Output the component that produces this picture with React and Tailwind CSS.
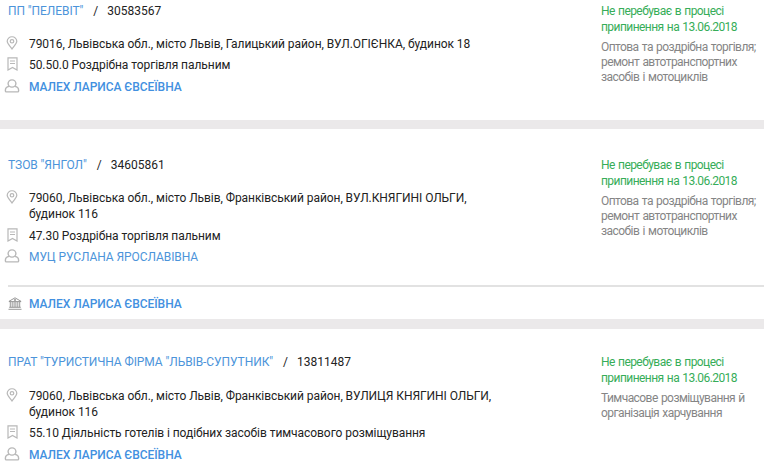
const PinIcon = () => (
  <svg className="h-[14px] w-[12px]" viewBox="0 0 12 15" preserveAspectRatio="none" fill="none" stroke="#b8b8b8" strokeWidth="1.2">
    <path d="M6 14C4.2 11 1.2 8.4 1.2 5.6a4.8 4.8 0 0 1 9.6 0C10.8 8.4 7.8 11 6 14Z" />
    <circle cx="6" cy="5.7" r="1.8" />
  </svg>
);

const BookmarkIcon = () => (
  <svg className="h-[14px] w-[11px]" viewBox="0 0 11 14" fill="none" stroke="#b8b8b8" strokeWidth="1.2">
    <path d="M1 .8h9v12.2L5.5 10.4 1 13ZM3 4h5M3 6.5h5" />
  </svg>
);

const PersonIcon = () => (
  <svg className="h-[14px] w-[16px]" viewBox="0 0 16 15" preserveAspectRatio="none" fill="none" stroke="#b8b8b8" strokeWidth="1.4">
    <circle cx="8" cy="4.8" r="3.9" />
    <path d="M5 7.800C2.500 8.300 1.400 9.700 1.400 12v.8c0 .6.4 1 1 1h11.200c.6 0 1-.4 1-1V12c0-2.300-1.100-3.700-3.600-4.200" />
  </svg>
);

const BankIcon = () => (
  <svg className="h-[13px] w-[14px]" viewBox="0 0 14 13" fill="none" stroke="#8c8c8c" strokeWidth="0.9">
    <path d="M.8 4.600h12.400M1 4.300 7 .8l6 3.500M1.200 10.300h11.600M.5 12.300h13M2.300 4.800v5.300M4.200 4.800v5.300M6.100 4.800v5.300M7.900 4.800v5.300M9.800 4.800v5.300M11.700 4.800v5.300" />
    <circle cx="7" cy="3" r=".7" />
  </svg>
);

function Row({ icon, className = "", children }) {
  return (
    <div className={"flex items-start " + className}>
      <div className="-ml-[4px] flex h-[14px] w-[16px] shrink-0 items-center justify-center">{icon}</div>
      <div className="ml-[9px] whitespace-nowrap">{children}</div>
    </div>
  );
}

function Title({ name, code }) {
  return (
    <div className="flex whitespace-nowrap">
      <a className="tracking-[-0.08px] text-[#4c94da]">{name}</a>
      <span className="ml-[10px]">/</span>
      <span className="ml-[9px] tracking-normal">{code}</span>
    </div>
  );
}

function Status({ lines }) {
  return (
    <div className="w-[163px] shrink-0 whitespace-nowrap text-[12px] tracking-[-0.56px] [word-spacing:0.8px]">
      <div className="text-[#36ad58]">
        Не перебуває в процесі
        <br />
        припинення на 13.06.2018
      </div>
      <div className="mt-[5px] leading-[15px] text-[#858585]">
        {lines.map((l) => (
          <div key={l}>{l}</div>
        ))}
      </div>
    </div>
  );
}

const Strong = ({ children }) => <a className="font-medium tracking-[-0.05px] text-[#4290e0]">{children}</a>;

export default function App() {
  return (
    <div className="h-[469px] w-[764px] overflow-hidden bg-white font-['Roboto',sans-serif] text-[12px] leading-[16px] tracking-[-0.06px] text-[#222]">
      <section className="flex h-[120px] justify-between pl-[8px] pt-[3px]">
        <div>
          <Title name={'ПП "ПЕЛЕВІТ"'} code="30583567" />
          <Row icon={<PinIcon />} className="mt-[17px]">
            79016, Львівська обл., місто Львів, Галицький район, ВУЛ.ОГІЄНКА, будинок 18
          </Row>
          <Row icon={<BookmarkIcon />} className="mt-[5px]">50.50.0 Роздрібна торгівля пальним</Row>
          <Row icon={<PersonIcon />} className="mt-[6px]"><Strong>МАЛЕХ ЛАРИСА ЄВСЕЇВНА</Strong></Row>
        </div>
        <Status lines={["Оптова та роздрібна торгівля;", "ремонт автотранспортних", "засобів і мотоциклів"]} />
      </section>

      <div className="h-[9px] bg-[#ebe9ea]" />

      <section className="h-[190px] pl-[8px] pt-[28px]">
        <div className="flex h-[128px] justify-between">
          <div>
            <Title name={'ТЗОВ "ЯНГОЛ"'} code="34605861" />
            <Row icon={<PinIcon />} className="mt-[17px]">
              79060, Львівська обл., місто Львів, Франківський район, ВУЛ.КНЯГИНІ ОЛЬГИ,
              <br />
              будинок 116
            </Row>
            <Row icon={<BookmarkIcon />} className="mt-[6px]">47.30 Роздрібна торгівля пальним</Row>
            <Row icon={<PersonIcon />} className="mt-[5px]"><a className="tracking-[-0.08px] text-[#4c94da]">МУЦ РУСЛАНА ЯРОСЛАВІВНА</a></Row>
          </div>
          <Status lines={["Оптова та роздрібна торгівля;", "ремонт автотранспортних", "засобів і мотоциклів"]} />
        </div>
        <div className="h-[2px] bg-[#e2e2e2]" />
        <div className="flex pt-[9px]">
          <div className="flex h-[15px] w-[14px] items-center"><BankIcon /></div>
          <div className="ml-[7px]"><Strong>МАЛЕХ ЛАРИСА ЄВСЕЇВНА</Strong></div>
        </div>
      </section>

      <div className="h-[10px] bg-[#ebe9ea]" />

      <section className="flex justify-between pl-[8px] pt-[25px]">
        <div>
          <Title name={'ПРАТ "ТУРИСТИЧНА ФІРМА "ЛЬВІВ-СУПУТНИК"'} code="13811487" />
          <Row icon={<PinIcon />} className="mt-[18px]">
            79060, Львівська обл., місто Львів, Франківський район, ВУЛИЦЯ КНЯГИНІ ОЛЬГИ,
            <br />
            будинок 116
          </Row>
          <Row icon={<BookmarkIcon />} className="mt-[5px]">55.10 Діяльність готелів і подібних засобів тимчасового розміщування</Row>
          <Row icon={<PersonIcon />} className="mt-[6px]"><Strong>МАЛЕХ ЛАРИСА ЄВСЕЇВНА</Strong></Row>
        </div>
        <Status lines={["Тимчасове розміщування й", "організація харчування"]} />
      </section>
    </div>
  );
}
